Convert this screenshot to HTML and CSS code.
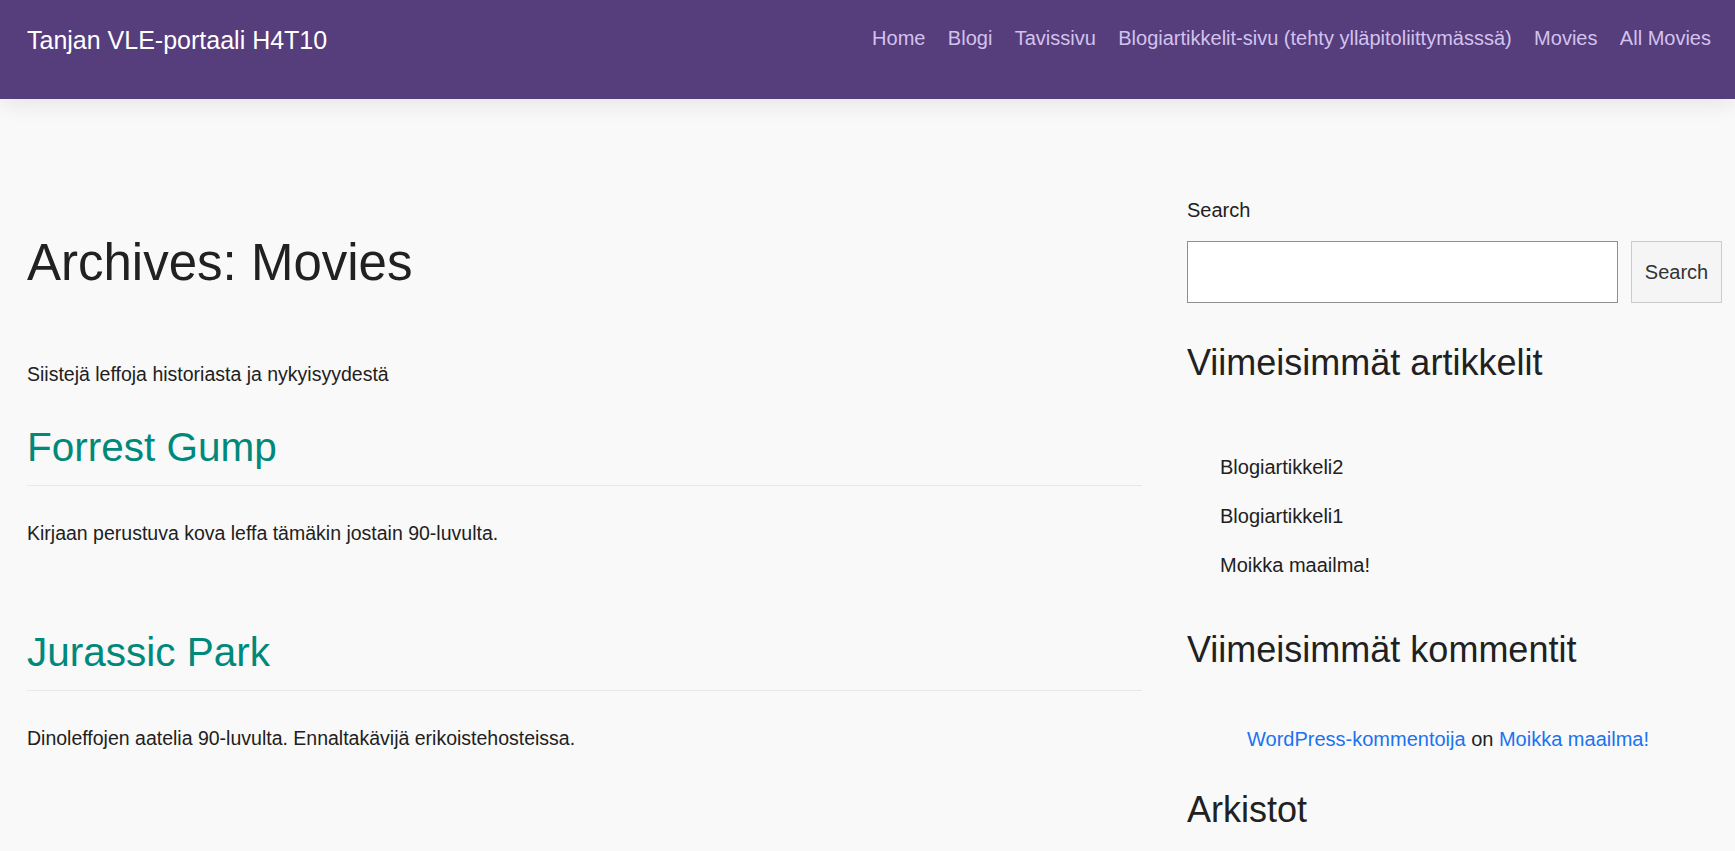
FILE: index.html
```html
<!DOCTYPE html>
<html lang="fi">
<head>
<meta charset="utf-8">
<title>Archives: Movies – Tanjan VLE-portaali H4T10</title>
<link rel="stylesheet" href="styles.css">
</head>
<body>
<header class="site-header">
  <a class="site-title" href="#">Tanjan VLE-portaali H4T10</a>
  <nav class="site-nav">
    <a href="#">Home</a>
    <a href="#">Blogi</a>
    <a href="#">Tavissivu</a>
    <a href="#">Blogiartikkelit-sivu (tehty ylläpitoliittymässsä)</a>
    <a href="#">Movies</a>
    <a href="#">All Movies</a>
  </nav>
</header>
<div class="page">
  <main class="content">
    <h1 class="archive-title">Archives: Movies</h1>
    <p class="archive-desc">Siistejä leffoja historiasta ja nykyisyydestä</p>
    <article class="post">
      <h2 class="post-title"><a href="#">Forrest Gump</a></h2>
      <p class="post-excerpt">Kirjaan perustuva kova leffa tämäkin jostain 90-luvulta.</p>
    </article>
    <article class="post">
      <h2 class="post-title"><a href="#">Jurassic Park</a></h2>
      <p class="post-excerpt">Dinoleffojen aatelia 90-luvulta. Ennaltakävijä erikoistehosteissa.</p>
    </article>
  </main>
  <aside class="sidebar">
    <label class="search-label" for="s">Search</label>
    <form class="search-form">
      <input id="s" class="search-input" type="search">
      <button class="search-btn" type="button">Search</button>
    </form>
    <h3 class="widget-title">Viimeisimmät artikkelit</h3>
    <ul class="recent-posts">
      <li><a href="#">Blogiartikkeli2</a></li>
      <li><a href="#">Blogiartikkeli1</a></li>
      <li><a href="#">Moikka maailma!</a></li>
    </ul>
    <h3 class="widget-title widget-gap">Viimeisimmät kommentit</h3>
    <ul class="recent-comments">
      <li><a class="blue" href="#">WordPress-kommentoija</a> on <a class="blue" href="#">Moikka maailma!</a></li>
    </ul>
    <h3 class="widget-title archives-title">Arkistot</h3>
  </aside>
</div>
</body>
</html>
```

FILE: styles.css
```css
* { box-sizing: border-box; }

html, body {
  margin: 0;
  padding: 0;
}

body {
  background: #f9f9f9;
  color: #212121;
  font-family: "Liberation Sans", Arial, sans-serif;
  font-size: 20px;
  line-height: 30px;
  overflow: hidden;
  height: 851px;
}

a { text-decoration: none; color: inherit; }

.site-header {
  position: relative;
  z-index: 2;
  height: 99px;
  background: #563d7c;
  display: flex;
  justify-content: space-between;
  align-items: flex-start;
  padding: 22px 24px 0 27px;
  box-shadow: 0 4px 22px rgba(0, 0, 0, 0.09);
}

.site-title {
  color: #ffffff;
  font-size: 25px;
  line-height: 36px;
}

.site-nav {
  display: flex;
  gap: 22.4px;
  padding-top: 1px;
}

.site-nav a {
  color: #d2c3ee;
  font-size: 20px;
  line-height: 30px;
}

.page {
  display: flex;
  gap: 45px;
  padding: 96px 13px 0 27px;
}

.content {
  width: 1115px;
  flex: none;
  font-size: 19.5px;
}

.sidebar {
  width: 535px;
  flex: none;
}

.archive-title {
  margin: 38px 0 0;
  font-size: 51px;
  line-height: 60px;
  font-weight: 400;
  color: #212121;
}

.archive-desc {
  margin: 66px 0 0;
}

.post-title {
  margin: 80px 0 0;
  font-size: 40.5px;
  line-height: 48px;
  font-weight: 400;
  padding-bottom: 14px;
  border-bottom: 1px solid #e8e8e8;
}

.archive-desc + .post .post-title {
  margin-top: 34px;
}

.post-title a {
  color: #00897b;
}

.post-excerpt {
  margin: 32px 0 0;
}

.search-label {
  display: block;
  line-height: 30px;
}

.search-form {
  display: flex;
  gap: 13px;
  margin: 16px 0 0;
}

.search-input {
  width: 431px;
  height: 62px;
  border: 1px solid #8f8f8f;
  background: #ffffff;
  padding: 0 12px;
  font: inherit;
  outline: none;
}

.search-btn {
  width: 91px;
  height: 62px;
  border: 1px solid #cccccc;
  background: #f5f5f5;
  color: #333333;
  font-family: "Liberation Sans", Arial, sans-serif;
  font-size: 20px;
  padding: 0;
}

.widget-title {
  margin: 39px 0 0;
  font-size: 36px;
  line-height: 42px;
  font-weight: 400;
  color: #212121;
}

.widget-gap {
  margin-top: 49px;
}

.archives-title {
  margin-top: 35px;
}

.recent-posts {
  list-style: none;
  margin: 68px 0 0;
  padding: 0 0 0 33px;
}

.recent-posts li {
  line-height: 30px;
}

.recent-posts li + li {
  margin-top: 19px;
}

.recent-comments {
  list-style: none;
  margin: 53px 0 0;
  padding: 0 0 0 60px;
}

.blue {
  color: #1a73f0;
}
```
